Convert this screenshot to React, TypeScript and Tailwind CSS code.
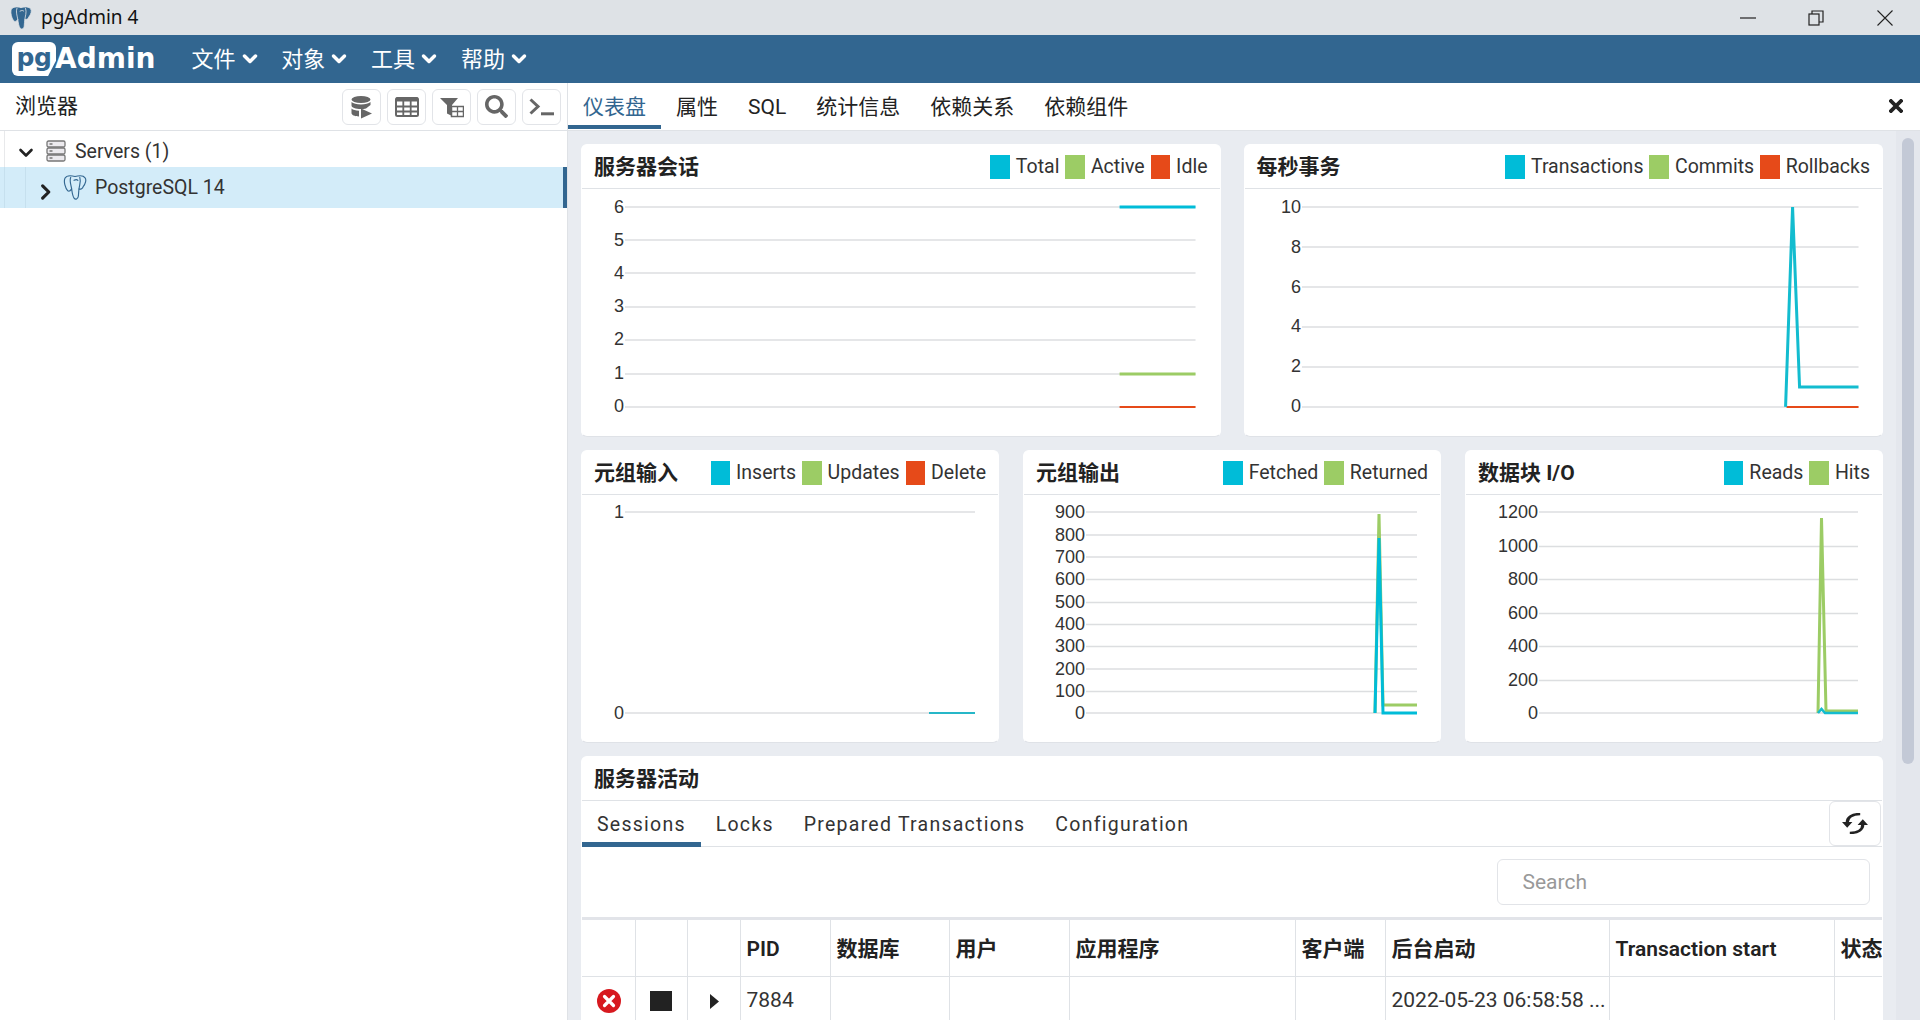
import React from "react";
import { FaSearch } from "react-icons/fa";

const CYAN = "#00bcd8";
const GREEN = "#9ccc65";
const RED = "#e64a19";

const Chevron = ({ dir, className, color = "#fff", sw = 3 }: { dir: "down" | "right"; className?: string; color?: string; sw?: number }) => (
  <svg viewBox="0 0 16 16" className={className} fill="none" stroke={color} strokeWidth={sw} strokeLinecap="round" strokeLinejoin="round">
    {dir === "down" ? <path d="M2.5 5l5.5 5.5L13.5 5" /> : <path d="M5 2.5L10.5 8 5 13.5" />}
  </svg>
);

type Series = { color: string; width?: number; points: [number, number][] };
type Tick = { label: string; y: number };

const Chart = ({ x, w, axis, x1, ticks, series }: { x: number; w: number; axis: number; x1: number; ticks: Tick[]; series: Series[] }) => (
  <svg viewBox={`${x} 189 ${w} 247`} className="block h-[247px] w-full">
    {ticks.map((t) => (
      <g key={t.label}>
        <line x1={axis} x2={x1} y1={t.y} y2={t.y} stroke="#dcdee0" strokeWidth={1.5} />
        <text x={axis - 1} y={t.y + 5.5} textAnchor="end" fontSize={18} fill="#333" fontFamily="'Liberation Sans', sans-serif">
          {t.label}
        </text>
      </g>
    ))}
    {series.map((s, i) => (
      <polyline key={i} fill="none" stroke={s.color} strokeWidth={s.width ?? 3} strokeLinejoin="miter" points={s.points.map((p) => p.join(",")).join(" ")} />
    ))}
  </svg>
);

const Legend = ({ items }: { items: [string, string][] }) => (
  <div className="flex items-center gap-[6px] text-[19.5px] text-[#333]">
    {items.map(([label, color]) => (
      <React.Fragment key={label}>
        <span className="h-6 w-[19.5px]" style={{ backgroundColor: color }} />
        <span>{label}</span>
      </React.Fragment>
    ))}
  </div>
);

const Card = ({ title, legend, children }: { title: string; legend: [string, string][]; children: React.ReactNode }) => (
  <div className="h-[293px] min-w-0 flex-1 rounded-md border border-white border-b-[#dfe2e7] bg-white">
    <div className="flex h-[44px] items-center justify-between border-b border-[#dfe2e6] pl-3 pr-3">
      <span className="pt-[2px] text-[21px] font-bold text-[#222]">{title}</span>
      <Legend items={legend} />
    </div>
    {children}
  </div>
);

const ToolBtn = ({ children }: { children: React.ReactNode }) => (
  <div className="flex h-9 w-[39px] items-center justify-center rounded-md border border-[#e2e4e8] bg-white text-[#666]">{children}</div>
);

const Elephant = ({ className, fill, stroke, sw }: { className?: string; fill: string; stroke: string; sw: number }) => (
  <svg viewBox="0 0 24 26" className={className} fill="none" stroke={stroke} strokeWidth={sw} strokeLinejoin="round" strokeLinecap="round">
    <path
      fill={fill}
      d="M12 1.500C8 .5 3 .5 1.500 3.500 0 7 2 14 4.500 16.500c1.500 1 3 -.5 4 -2 .5 3.500 1 7.500 2.500 9.500 1.500 2 4 1 4.500 -2 .3 -3 .3 -5.500.7 -7.500 1.800.5 3.800 -.5 4.300 -2.500 2.500 -3 3.500 -7 2 -9C21 .5 16 .5 12 1.500z"
    />
    <path d="M8.500 14.500C8 11 6 6 7.500 2.500M16.200 14.500C16.500 11 18.500 7 17 2.500M11 5.500c2-1 3-1 4 0" />
  </svg>
);

const columns = ["", "", "", "PID", "数据库", "用户", "应用程序", "客户端", "后台启动", "Transaction start", "状态"];
const row: React.ReactNode[] = [
  <svg key="a" viewBox="0 0 24 24" className="h-6 w-6">
    <circle cx="12" cy="12" r="12" fill="#d7191f" />
    <path d="M7.500 7.500l9 9M16.500 7.500l-9 9" stroke="#fff" strokeWidth="3.200" strokeLinecap="round" />
  </svg>,
  <span key="b" className="-ml-[2px] block h-5 w-[22px] bg-[#222]" />,
  <svg key="c" viewBox="0 0 9 15" className="h-[15px] w-[9px]">
    <path d="M0 0l9 7.500L0 15z" fill="#222" />
  </svg>,
  "7884",
  "",
  "",
  "",
  "",
  "2022-05-23 06:58:58 ...",
  "",
  "",
];

export default function App() {
  return (
    <div className="flex h-screen w-full flex-col overflow-hidden bg-white font-[Roboto,'Noto_Sans_CJK_SC',sans-serif] text-[#222]">
      {/* window title */}
      <div className="flex h-[35px] shrink-0 items-center bg-[#dee2e6]">
        <Elephant className="ml-[10px] h-[26px] w-[22px]" fill="#336791" stroke="#dee2e6" sw={0.9} />
        <span className="ml-[9px] font-['Noto_Sans',sans-serif] text-[19px] text-[#111]">pgAdmin 4</span>
        <div className="ml-auto flex items-center">
          <svg viewBox="0 0 16 16" className="mr-[52px] h-4 w-4" fill="none" stroke="#222" strokeWidth="1.200"><path d="M0 8h16" /></svg>
          <svg viewBox="0 0 16 16" className="mr-[53px] h-4 w-4" fill="none" stroke="#222" strokeWidth="1.200"><rect x="1" y="4" width="10" height="11" /><path d="M4 4V1h11v11h-4" /></svg>
          <svg viewBox="0 0 16 16" className="mr-[27px] h-4 w-4" fill="none" stroke="#222" strokeWidth="1.100"><path d="M0.500 0.500l15 15M15.500 0.500l-15 15" /></svg>
        </div>
      </div>

      {/* nav */}
      <div className="flex h-[48px] shrink-0 items-center bg-[#326690] text-white">
        <div className="ml-3 flex w-[179.5px] items-center">
          <div className="flex h-[34px] w-[44px] items-center justify-center rounded-l-md rounded-tr-md bg-white pb-[3px] font-['DejaVu_Sans',sans-serif] text-[25px] font-bold tracking-[-0.5px] text-[#326690] [clip-path:polygon(0_0,100%_0,100%_55%,82%_100%,0_100%)]">pg</div>
          <span className="-ml-[1px] font-['DejaVu_Sans',sans-serif] text-[28px] font-bold leading-none">Admin</span>
        </div>
        {["文件", "对象", "工具", "帮助"].map((m) => (
          <div key={m} className="flex w-[89.8px] items-center text-[22px]">
            <span>{m}</span>
            <Chevron dir="down" className="ml-[6px] h-4 w-4" sw={3.5} />
          </div>
        ))}
      </div>

      {/* body */}
      <div className="flex min-h-0 flex-1">
        {/* browser */}
        <div className="w-[568px] shrink-0 border-r border-[#dfe2e6]">
          <div className="flex h-[48px] items-center border-b border-[#dfe2e6] pl-[15px] pr-[6px]">
            <span className="pt-[1px] text-[21px]">浏览器</span>
            <div className="ml-auto flex gap-[6px]">
              <ToolBtn>
                <svg viewBox="0 0 24 24" className="h-[24px] w-[24px]" fill="#666">
                  <ellipse cx="11" cy="4.500" rx="9.500" ry="3.500" />
                  <path d="M1.500 7v3.500c0 2 4 3.500 9.500 3.500 2 0 3.700-.2 5-.6L20.500 10V7c-1.600 1.600-5.300 2.400-9.500 2.400S3.100 8.600 1.500 7z" />
                  <path d="M1.500 13.500V18c0 2 3 3.300 7.500 3.500v-5.700c-3.500-.2-6-1-7.500-2.300z" />
                  <path d="M11 13.500v10l11-5z" />
                </svg>
              </ToolBtn>
              <ToolBtn>
                <svg viewBox="0 0 24 20" className="h-[20px] w-[24px]" fill="none" stroke="#666">
                  <rect x="1" y="1" width="22" height="18" rx="1.500" strokeWidth="2" />
                  <path d="M1 2.500h22" strokeWidth="4" />
                  <path d="M1 9.500h22M1 14.500h22M8.300 4v15M15.700 4v15" strokeWidth="1.800" />
                </svg>
              </ToolBtn>
              <ToolBtn>
                <svg viewBox="0 0 24 22" className="h-[22px] w-[24px]" fill="#666">
                  <path d="M0 2h18l-6 7v11l-5-2.500V9z" />
                  <rect x="11.500" y="10.500" width="12" height="10" fill="#fff" stroke="#666" strokeWidth="1.500" />
                  <path d="M11.500 15.500h12M17.500 10.500v10" stroke="#666" strokeWidth="1.300" />
                </svg>
              </ToolBtn>
              <ToolBtn>
                <FaSearch className="h-[23px] w-[23px]" />
              </ToolBtn>
              <ToolBtn>
                <svg viewBox="0 0 26 18" className="h-[18px] w-[26px]" fill="none" stroke="#666" strokeWidth="3">
                  <path d="M1.500 1.500L9 8.500 1.500 15.500" />
                  <path d="M12 15.800h13" />
                </svg>
              </ToolBtn>
            </div>
          </div>
          <div className="ml-1 flex h-9 items-center border-l border-[#e8e9eb] pt-[4px] text-[19.5px] text-[#333]">
            <Chevron dir="down" className="ml-[13px] mt-[4px] h-4 w-4" color="#222" sw={2.6} />
            <svg viewBox="0 0 20 22" className="ml-[12px] h-[22px] w-5" fill="#eceaee" stroke="#777" strokeWidth="1.300">
              <rect x="1" y="1" width="18" height="6" rx="1.500" />
              <rect x="1" y="8" width="18" height="6" rx="1.500" />
              <rect x="1" y="15" width="18" height="6" rx="1.500" />
              <path d="M3.500 4h3M3.500 11h3M3.500 18h3" />
            </svg>
            <span className="ml-[9px] mt-[1px]">Servers (1)</span>
          </div>
          <div className="flex h-[41px] items-center border-r-4 border-r-[#326690] bg-[#d3ecf9] text-[19.5px] text-[#333]">
            <span className="ml-1 h-full border-l border-[#c6e0ee]" />
            <span className="ml-5 h-full border-l border-[#c6e0ee]" />
            <Chevron dir="right" className="ml-[13px] mt-[8px] h-[18px] w-[18px] -translate-x-[2px]" color="#222" sw={2.8} />
            <Elephant className="ml-[6px] h-[25px] w-[24px]" fill="#d3ecf9" stroke="#336791" sw={1.2} />
            <span className="ml-[8px]">PostgreSQL 14</span>
          </div>
        </div>

        {/* main */}
        <div className="flex min-w-0 flex-1 flex-col">
          <div className="flex h-[48px] shrink-0 border-b border-[#dfe2e6] text-[21px]">
            {["仪表盘", "属性", "SQL", "统计信息", "依赖关系", "依赖组件"].map((t, i) => (
              <div key={t} className={`flex h-[46px] items-center px-[15px] pt-[7px] ${i === 0 ? "border-b-4 border-[#326690] text-[#326690]" : "pb-[4px]"}`}>
                {t}
              </div>
            ))}
            <svg viewBox="0 0 14 14" className="ml-auto mr-[17px] mt-[16px] h-[14px] w-[14px]" stroke="#222" strokeWidth="3.800" strokeLinecap="square">
              <path d="M2 2l10 10M12 2L2 12" />
            </svg>
          </div>

          <div className="flex min-h-0 flex-1 bg-[#e9ecf1]">
            <div className="flex min-w-0 flex-1 flex-col gap-[13px] overflow-hidden px-[13px] pt-[13px]">
              <div className="flex shrink-0 gap-[23px]">
                <Card title="服务器会话" legend={[["Total", CYAN], ["Active", GREEN], ["Idle", RED]]}>
                  <Chart
                    x={582}
                    w={638}
                    axis={625}
                    x1={1196}
                    ticks={[
                      { label: "6", y: 207 },
                      { label: "5", y: 240 },
                      { label: "4", y: 273 },
                      { label: "3", y: 307 },
                      { label: "2", y: 340 },
                      { label: "1", y: 374 },
                      { label: "0", y: 407 },
                    ]}
                    series={[
                      { color: CYAN, points: [[1120, 207], [1196, 207]] },
                      { color: GREEN, points: [[1120, 374], [1196, 374]] },
                      { color: RED, width: 2, points: [[1120, 407], [1196, 407]] },
                    ]}
                  />
                </Card>
                <Card title="每秒事务" legend={[["Transactions", CYAN], ["Commits", GREEN], ["Rollbacks", RED]]}>
                  <Chart
                    x={1244}
                    w={638}
                    axis={1301}
                    x1={1858}
                    ticks={[
                      { label: "10", y: 207 },
                      { label: "8", y: 247 },
                      { label: "6", y: 287 },
                      { label: "4", y: 327 },
                      { label: "2", y: 367 },
                      { label: "0", y: 407 },
                    ]}
                    series={[
                      { color: RED, width: 2, points: [[1786, 407], [1858, 407]] },
                      { color: "#13bccf", points: [[1785, 407], [1792, 207], [1799, 387], [1858, 387]] },
                    ]}
                  />
                </Card>
              </div>

              <div className="flex shrink-0 gap-[24px]">
                <Card title="元组输入" legend={[["Inserts", CYAN], ["Updates", GREEN], ["Delete", RED]]}>
                  <Chart
                    x={582}
                    w={416}
                    axis={625}
                    x1={975}
                    ticks={[
                      { label: "1", y: 206 },
                      { label: "0", y: 407 },
                    ]}
                    series={[{ color: "#26b7c8", width: 2, points: [[929, 407], [975, 407]] }]}
                  />
                </Card>
                <Card title="元组输出" legend={[["Fetched", CYAN], ["Returned", GREEN]]}>
                  <Chart
                    x={1024}
                    w={416}
                    axis={1086}
                    x1={1417}
                    ticks={[
                      { label: "900", y: 206 },
                      { label: "800", y: 229 },
                      { label: "700", y: 251 },
                      { label: "600", y: 273.5 },
                      { label: "500", y: 296.5 },
                      { label: "400", y: 318.5 },
                      { label: "300", y: 340.5 },
                      { label: "200", y: 363 },
                      { label: "100", y: 385.5 },
                      { label: "0", y: 407 },
                    ]}
                    series={[
                      { color: GREEN, points: [[1375, 407], [1379, 208], [1383, 399], [1417, 399]] },
                      { color: CYAN, points: [[1375, 407], [1379, 232], [1383, 407], [1417, 407]] },
                    ]}
                  />
                </Card>
                <Card title="数据块 I/O" legend={[["Reads", CYAN], ["Hits", GREEN]]}>
                  <Chart
                    x={1466}
                    w={416}
                    axis={1539}
                    x1={1858}
                    ticks={[
                      { label: "1200", y: 206 },
                      { label: "1000", y: 240.5 },
                      { label: "800", y: 273.5 },
                      { label: "600", y: 307.5 },
                      { label: "400", y: 340.5 },
                      { label: "200", y: 374.5 },
                      { label: "0", y: 407 },
                    ]}
                    series={[
                      { color: GREEN, points: [[1818, 407], [1821.5, 212], [1826, 405], [1858, 405]] },
                      { color: "#13bccf", width: 2.5, points: [[1818, 407], [1821.5, 403], [1825, 407], [1858, 407]] },
                    ]}
                  />
                </Card>
              </div>

              {/* activity */}
              <div className="flex-1 rounded-t-md border border-b-0 border-white bg-white">
                <div className="flex h-[44px] items-center border-b border-[#dfe2e6] pl-3 pt-[2px] text-[21px] font-bold text-[#222]">服务器活动</div>
                <div className="flex h-[46px] border-b border-[#dfe2e6] text-[19.5px] tracking-[1.25px] text-[#333]">
                  {["Sessions", "Locks", "Prepared Transactions", "Configuration"].map((t, i) => (
                    <div key={t} className={`flex h-[46px] items-center px-[15px] ${i === 0 ? "border-b-[5px] border-[#326690] pt-[7px]" : "pt-[6px] pb-[4px]"}`}>
                      {t}
                    </div>
                  ))}
                  <div className="ml-auto mr-px flex h-[45px] w-[52px] items-center justify-center rounded-md border border-[#e2e4e8]">
                    <svg viewBox="2 2 20 20" preserveAspectRatio="none" className="h-[21px] w-[26px]" fill="#222">
                      <path d="M6 11C6 6 10 3 16 3M18 13C18 18 14 21 8 21" fill="none" stroke="#222" strokeWidth="2.400" />
                      <path d="M2 10.500h8L6 16zM14 13.500h8L18 8z" />
                    </svg>
                  </div>
                </div>
                <div className="flex h-[70px] items-center justify-end pr-[12.5px]">
                  <input
                    readOnly
                    placeholder="Search"
                    className="h-[46px] w-[373px] rounded-md border border-[#e2e4e8] pl-[25px] text-[21px] placeholder:text-[#999]"
                  />
                </div>
                <div className="grid grid-cols-[54px_52px_53px_90px_119px_120px_226px_90px_224px_225px_120px] overflow-hidden border-t-[3px] border-[#e2e4e9] text-[21px]">
                  {columns.map((c, i) => (
                    <div key={i} className="flex h-[57px] items-center whitespace-nowrap border-b border-r border-[#dfe2e6] pl-[5.5px] pt-[4px] font-semibold text-[#222]">
                      {c}
                    </div>
                  ))}
                  {row.map((c, i) => (
                    <div key={i} className={`flex h-[44px] items-center whitespace-nowrap border-r border-[#dfe2e6] pt-[4px] text-[#333] ${i < 3 ? "justify-center pl-0" : "pl-[5.5px]"}`}>
                      {c}
                    </div>
                  ))}
                </div>
              </div>
            </div>

            {/* scrollbar */}
            <div className="w-[24px] shrink-0 bg-[#e4e7ed] pl-[6px] pr-[6px] pt-[7px]">
              <div className="h-[626px] rounded-md bg-[#c3c9d6]" />
            </div>
          </div>
        </div>
      </div>
    </div>
  );
}
